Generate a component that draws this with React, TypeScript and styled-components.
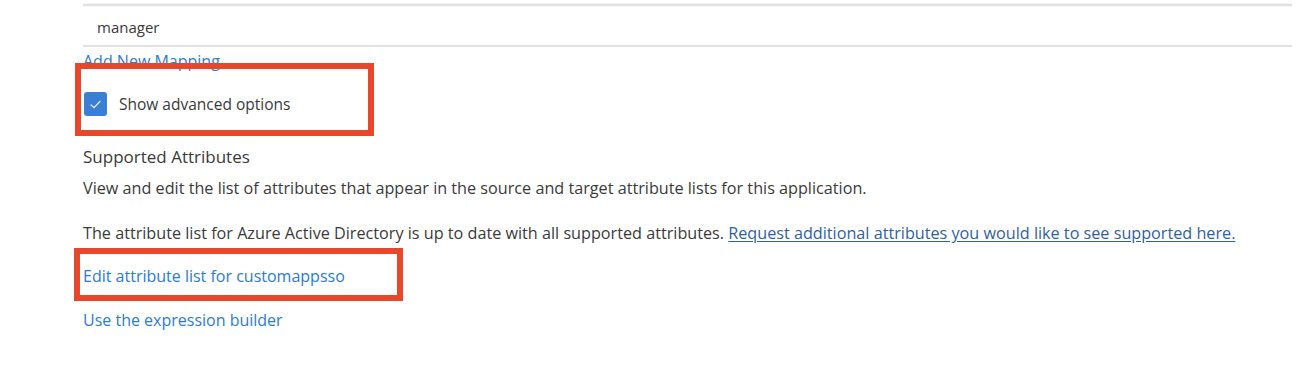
import styled, { createGlobalStyle } from 'styled-components';

const GlobalStyle = createGlobalStyle`
  html, body {
    margin: 0;
    padding: 0;
    background: #ffffff;
  }
  body {
    font-family: 'Open Sans', 'Noto Sans', sans-serif;
    color: #323130;
  }
`;

export default function App() {
  return (
    <>
      <GlobalStyle />
      <Page>
        <MappingRow>
          <Cell>manager</Cell>
        </MappingRow>
        <AddLink href="#">Add New Mapping</AddLink>

        <Highlight width={299} height={73} offset={-8} shift={8} pad="23px 0 0 3px">
          <CheckRow>
            <Checkbox>
              <svg width="15" height="15" viewBox="0 0 16 16" fill="none">
                <path d="M3.2 8.4 L6.4 11.4 L12.8 4.6" stroke="#ffffff" strokeWidth="1.2" strokeLinecap="round" strokeLinejoin="round" />
              </svg>
            </Checkbox>
            <CheckLabel>Show advanced options</CheckLabel>
          </CheckRow>
        </Highlight>

        <SectionTitle>Supported Attributes</SectionTitle>
        <Paragraph gap={10}>
          View and edit the list of attributes that appear in the source and target attribute lists for this application.
        </Paragraph>
        <Paragraph gap={25}>
          The attribute list for Azure Active Directory is up to date with all supported attributes.{' '}
          <InlineLink href="#">Request additional attributes you would like to see supported here.</InlineLink>
        </Paragraph>

        <Highlight width={329} height={53} offset={5} shift={9} pad="12px 0 0 3px">
          <ActionLink href="#">Edit attribute list for customappsso</ActionLink>
        </Highlight>
        <ActionLink href="#" top={9}>Use the expression builder</ActionLink>
      </Page>
    </>
  );
}

const Page = styled.div`
  padding: 4px 12px 0 83px;
  display: flex;
  flex-direction: column;
  align-items: flex-start;
`;

const MappingRow = styled.div`
  align-self: stretch;
  box-sizing: border-box;
  height: 43px;
  padding-top: 2px;
  border-top: 2px solid #e2e2e2;
  border-bottom: 2px solid #e2e2e2;
  box-shadow: 0 -1px 0 #f4f4f4, inset 0 1px 0 #f7f7f7;
  display: flex;
  align-items: center;
`;

const Cell = styled.span`
  padding-left: 14px;
  font-size: 15px;
  color: #3a3a3a;
`;

const AddLink = styled.a`
  display: block;
  margin-top: 4px;
  font-size: 16px;
  line-height: 20px;
  color: #2a7bd6;
  text-decoration: none;
`;

const Highlight = styled.div<{ width: number; height: number; offset: number; pad: string; shift: number }>`
  position: relative;
  box-sizing: border-box;
  width: ${p => p.width}px;
  height: ${p => p.height}px;
  margin-top: ${p => p.offset}px;
  margin-left: -${p => p.shift}px;
  padding: ${p => p.pad};
  border: 6px solid #e8472b;
`;

const CheckRow = styled.label`
  display: flex;
  align-items: center;
  gap: 12px;
`;

const Checkbox = styled.span`
  width: 23px;
  height: 24px;
  border-radius: 3px;
  background: #3a7fd6;
  display: flex;
  align-items: center;
  justify-content: center;
`;

const CheckLabel = styled.span`
  font-size: 15.5px;
  color: #3a3a3a;
`;

const SectionTitle = styled.h2`
  margin: 10px 0 0;
  font-size: 17px;
  font-weight: 400;
  line-height: 22px;
  color: #3a3a3a;
`;

const Paragraph = styled.p<{ gap: number }>`
  margin: ${p => p.gap}px 0 0;
  font-size: 16.2px;
  line-height: 20px;
  color: #3a3a3a;
`;

const InlineLink = styled.a`
  color: #2e5fa6;
  text-decoration: underline;
  text-underline-offset: 2px;
`;

const ActionLink = styled.a<{ top?: number }>`
  display: block;
  margin-top: ${p => p.top ?? 0}px;
  font-size: 16px;
  line-height: 20px;
  color: #2a7bd6;
  text-decoration: none;
`;
